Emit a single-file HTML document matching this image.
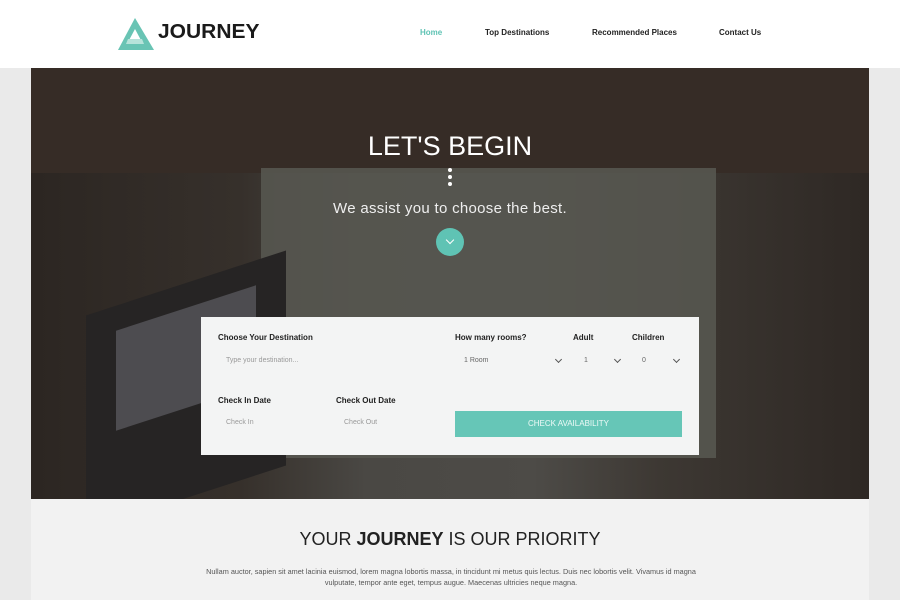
<!DOCTYPE html>
<html><head><meta charset="utf-8"><style>
*{margin:0;padding:0;box-sizing:border-box}
body{width:900px;height:600px;overflow:hidden;background:#eaeaea;font-family:"Liberation Sans",sans-serif}
.hdr{position:absolute;left:0;top:0;width:900px;height:68px;background:#fff}
.logo{position:absolute;left:118px;top:18px}
.logo span{position:absolute;left:40px;top:3px;font-size:20px;font-weight:bold;color:#1a1a1a;transform:scaleX(1.05);transform-origin:left}
.nav a{position:absolute;top:28px;font-size:8px;font-weight:bold;color:#222;text-decoration:none}
.hero{position:absolute;left:31px;top:68px;width:838px;height:431px;overflow:hidden;
background:linear-gradient(90deg,#2c2622 0%,#36302b 25%,#4a4844 40%,#4d4b47 60%,#3d3833 75%,#2e2824 100%)}
.map{position:absolute;left:230px;top:100px;width:455px;height:290px;background:#575650;opacity:.9}
.dark{position:absolute;left:0;top:0;width:100%;height:105px;background:#362c26}
.lap{position:absolute;left:55px;top:215px;width:200px;height:215px;background:#262424;transform:skewY(-18deg)}
.lap2{position:absolute;left:85px;top:240px;width:140px;height:100px;background:#4d4c50;transform:skewY(-18deg)}
.h1{position:absolute;left:0;width:838px;text-align:center;color:#fff}
.dots{position:absolute;left:417px;top:100px;width:4px}
.dots i{display:block;width:4px;height:4px;border-radius:2px;background:#fff;margin-bottom:3px}
.btn{position:absolute;left:405px;top:160px;width:28px;height:28px;border-radius:14px;background:#5fc3b4}
.card{position:absolute;left:201px;top:317px;width:498px;height:138px;background:#f3f4f4}
.l{position:absolute;font-size:8px;font-weight:bold;color:#222}
.p{position:absolute;font-size:7px;color:#999}
.ch{position:absolute;width:5px;height:5px;border-right:1px solid #555;border-bottom:1px solid #555;transform:rotate(45deg)}
.cta{position:absolute;left:455px;top:411px;width:227px;height:26px;background:#66c6b7;color:#eefaf7;font-size:8px;text-align:center;line-height:26px}
.sec{position:absolute;left:31px;top:499px;width:838px;height:101px;background:#f2f2f2}
</style></head><body>
<div class="hdr">
<div class="logo"><svg width="38" height="32" viewBox="0 0 38 32"><polygon points="17,0 36,32 0,32" fill="#69c4b4"/><polygon points="17,11 25,26 9,26" fill="#fff"/><polygon points="10,21 24,21 26,26 8,26" fill="#b7e3da"/></svg><span>JOURNEY</span></div>
<div class="nav"><a style="left:420px;color:#5fc3b4">Home</a><a style="left:485px">Top Destinations</a><a style="left:592px">Recommended Places</a><a style="left:719px">Contact Us</a></div>
</div>
<div class="hero">
<div class="dark"></div>
<div class="map"></div>
<div class="lap"></div><div class="lap2"></div>
<div class="h1" style="top:63px;font-size:27px">LET'S BEGIN</div>
<div class="dots"><i></i><i></i><i></i></div>
<div class="h1" style="top:132px;font-size:15px;color:#eee;letter-spacing:.3px">We assist you to choose the best.</div>
<div class="btn"><div class="ch" style="left:11px;top:9px;border-color:#fff;width:6px;height:6px"></div></div>
</div>
<div class="card"></div>
<div class="l" style="left:218px;top:333px">Choose Your Destination</div>
<div class="l" style="left:455px;top:333px">How many rooms?</div>
<div class="l" style="left:573px;top:333px">Adult</div>
<div class="l" style="left:632px;top:333px">Children</div>
<div class="p" style="left:226px;top:357px">Type your destination...</div>
<div class="p" style="left:464px;top:357px;color:#666">1 Room</div>
<div class="p" style="left:584px;top:357px;color:#666">1</div>
<div class="p" style="left:642px;top:357px;color:#666">0</div>
<div class="ch" style="left:556px;top:357px"></div>
<div class="ch" style="left:615px;top:357px"></div>
<div class="ch" style="left:674px;top:357px"></div>
<div class="l" style="left:218px;top:396px">Check In Date</div>
<div class="l" style="left:336px;top:396px">Check Out Date</div>
<div class="p" style="left:226px;top:419px">Check In</div>
<div class="p" style="left:344px;top:419px">Check Out</div>
<div class="cta">CHECK AVAILABILITY</div>
<div class="sec">
<div style="position:absolute;top:30px;width:838px;text-align:center;font-size:18px;color:#222">YOUR <b>JOURNEY</b> IS OUR PRIORITY</div>
<div style="position:absolute;left:165px;top:67px;width:510px;text-align:center;font-size:7.3px;line-height:11px;color:#555">Nullam auctor, sapien sit amet lacinia euismod, lorem magna lobortis massa, in tincidunt mi metus quis lectus. Duis nec lobortis velit. Vivamus id magna vulputate, tempor ante eget, tempus augue. Maecenas ultricies neque magna.</div>
</div>
</body></html>
